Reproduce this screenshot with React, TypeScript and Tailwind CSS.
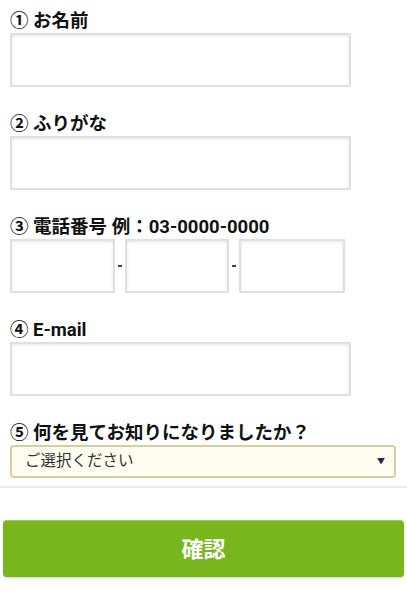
import React from "react";

const font = { fontFamily: "Roboto, 'Noto Sans CJK JP', sans-serif" };

function Label({ children }: { children: React.ReactNode }) {
  return (
    <div className="ml-[10px] h-[24px] text-[18.5px] leading-[24px] font-bold text-[#111] whitespace-nowrap">
      {children}
    </div>
  );
}

function Box({ className }: { className: string }) {
  return (
    <div
      className={
        "h-[54px] bg-white border-2 border-[#e0e0e0] shadow-[inset_0_1px_3px_rgba(0,0,0,0.10)] " +
        className
      }
    />
  );
}

export default function App() {
  return (
    <div className="w-[407px] h-[602px] bg-white overflow-hidden" style={font}>
      <div className="pt-[9px]">
        <Label>① お名前</Label>
        <Box className="ml-[10px] w-[341px]" />
        <div className="h-[25px]" />
        <Label>② ふりがな</Label>
        <Box className="ml-[10px] w-[341px]" />
        <div className="h-[25px]" />
        <Label>③ 電話番号 例：03-0000-0000</Label>
        <div className="ml-[10px] flex items-center">
          <Box className="w-[105px]" />
          <div className="w-[10px] flex justify-center">
            <div className="w-[4px] h-[2px] bg-[#444]" />
          </div>
          <Box className="w-[104px]" />
          <div className="w-[10px] flex justify-center">
            <div className="w-[4px] h-[2px] bg-[#444]" />
          </div>
          <Box className="w-[106px]" />
        </div>
        <div className="h-[25px]" />
        <Label>④ E-mail</Label>
        <Box className="ml-[10px] w-[341px]" />
        <div className="h-[25px]" />
        <Label>⑤ 何を見てお知りになりましたか？</Label>
        <div className="ml-[10px] w-[386px] h-[33px] rounded-[4px] border-2 border-[#d9cc9f] bg-[#fffdf0] flex items-center justify-between pl-[13px] pr-[9px]">
          <span className="text-[15.5px] text-[#333]">ご選択ください</span>
          <span className="text-[8px] text-[#1e2a44]">▼</span>
        </div>
        <div className="mt-[8px] h-[2px] bg-[#ececec]" />
        <div className="mt-[32px] mx-[3px] h-[57px] rounded-[4px] bg-[#79b51c] border-t border-[#9ccb55] shadow-[0_1px_2px_rgba(0,0,0,0.2)] flex items-center justify-center">
          <span className="text-white font-bold text-[22px]">確認</span>
        </div>
      </div>
    </div>
  );
}
